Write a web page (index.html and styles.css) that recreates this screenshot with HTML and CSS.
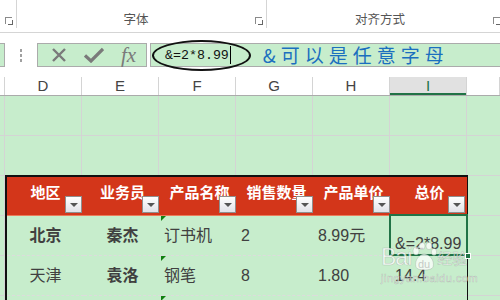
FILE: index.html
```html
<!DOCTYPE html>
<html>
<head lang="zh">
    <meta charset="UTF-8">
    <title>总价</title>
    <link rel="stylesheet" href="styles.css">
</head>
<body>

<div class="ribbon">
    <div class="grp grp-a"><span class="lbl"></span><span class="launch"></span></div>
    <div class="grp grp-b"><span class="lbl">字体</span><span class="launch"></span></div>
    <div class="grp grp-c"><span class="lbl">对齐方式</span><span class="launch"></span></div>
</div>

<div class="fbar">
    <div class="namebox"></div>
    <div class="grip"><i></i><i></i><i></i></div>
    <div class="fbtns">
        <span class="fbtn">
            <svg width="16" height="16" viewBox="0 0 16 16"><path d="M2 2 L14 14 M14 2 L2 14" stroke="#7a7a7a" stroke-width="2.4" fill="none"/></svg>
        </span>
        <span class="fbtn">
            <svg width="20" height="16" viewBox="0 0 20 16"><path d="M1 8.5 L7 14 L19 2" stroke="#7a7a7a" stroke-width="3.2" fill="none"/></svg>
        </span>
        <span class="fbtn fx">fx</span>
    </div>
    <div class="finput">
        <span class="ftext">&amp;=2*8.99</span><span class="caret"></span>
        <span class="note">&amp;可以是任意字母</span>
        <span class="ring"></span>
    </div>
</div>

<div class="colhead">
    <div class="ch corner"></div>
    <div class="ch">D</div>
    <div class="ch">E</div>
    <div class="ch">F</div>
    <div class="ch">G</div>
    <div class="ch">H</div>
    <div class="ch sel">I</div>
    <div class="ch"></div>
</div>

<div class="sheet">
    <div class="tbl">
        <div class="th">地区<span class="filter"></span></div>
        <div class="th">业务员<span class="filter"></span></div>
        <div class="th">产品名称<span class="filter"></span></div>
        <div class="th">销售数量<span class="filter"></span></div>
        <div class="th">产品单价<span class="filter"></span></div>
        <div class="th">总价<span class="filter"></span></div>

        <div class="td mid bold">北京</div>
        <div class="td mid bold">秦杰</div>
        <div class="td mark">订书机</div>
        <div class="td">2</div>
        <div class="td">8.99元</div>
        <div class="td cur">&amp;=2*8.99<span class="handle"></span></div>

        <div class="td mid">天津</div>
        <div class="td mid bold">袁洛</div>
        <div class="td mark">钢笔</div>
        <div class="td">8</div>
        <div class="td">1.80</div>
        <div class="td">14.4</div>

        <div class="td last"></div>
        <div class="td last"></div>
        <div class="td last mark"></div>
        <div class="td last"></div>
        <div class="td last"></div>
        <div class="td last"></div>
    </div>

    <div class="watermark">
        <div class="wm-top">
            <span class="wm-bai">Bai</span>
            <svg width="26" height="30" viewBox="0 0 26 30">
                <ellipse cx="5" cy="9" rx="3" ry="4" />
                <ellipse cx="11" cy="4" rx="3" ry="3.6" />
                <ellipse cx="18" cy="4" rx="3" ry="3.6" />
                <ellipse cx="23" cy="10" rx="2.6" ry="3.6" />
                <path d="M5 25 C3 18 9 12 13 12 C18 12 24 18 22 25 C21 29 6 29 5 25 Z" />
                <text x="7" y="26" class="wm-du">du</text>
            </svg>
            <span class="wm-jy">经验</span>
        </div>
        <div class="wm-url">jingyan.baidu.com</div>
    </div>
</div>

</body>
</html>
```

FILE: styles.css
```css
*{
    margin: 0px;
    padding: 0px;
    box-sizing: border-box;
}
body{
    width: 500px;
    height: 300px;
    overflow: hidden;
    background: #ffffff;
    font-family: "Liberation Sans", "Noto Sans CJK SC", sans-serif;
    color: #444444;
}

/* ribbon */
.ribbon{
    display: flex;
    align-items: flex-start;
    height: 33px;
    border-bottom: 1px solid #d5d5d5;
}
.grp{
    display: flex;
    align-items: flex-end;
    height: 28px;
    padding-bottom: 1px;
    border-right: 1px solid #d5d5d5;
    flex-shrink: 0;
}
.grp-a{ width: 17px; }
.grp-b{ width: 250px; }
.grp-c{ width: 238px; }
.lbl{
    flex: 1;
    text-align: center;
    font-size: 12.5px;
    line-height: 16px;
    color: #555555;
    font-family: "Noto Sans CJK SC", sans-serif;
}
.launch{
    width: 7px;
    height: 7px;
    margin: 0 4px 3px 0;
    border-left: 1px solid #8a8a8a;
    border-top: 1px solid #8a8a8a;
    position: relative;
}
.launch::after{
    content: "";
    position: absolute;
    right: -1px;
    bottom: -1px;
    width: 4px;
    height: 4px;
    border-right: 1px solid #666666;
    border-bottom: 1px solid #666666;
}

/* formula bar */
.fbar{
    display: flex;
    height: 24px;
    margin-top: 10px;
}
.namebox{
    width: 5px;
    background: #c7edcc;
    border: 1px solid #ababab;
    border-left: none;
}
.grip{
    width: 32px;
    display: flex;
    flex-direction: column;
    align-items: center;
    justify-content: center;
    gap: 2px;
}
.grip i{
    width: 2px;
    height: 3px;
    background: #a0a0a0;
}
.fbtns{
    width: 110px;
    margin-right: 3px;
    display: flex;
    align-items: center;
    padding-left: 3px;
    background: #c7edcc;
    border: 1px solid #ababab;
}
.fbtn{
    width: 35px;
    display: flex;
    justify-content: center;
    align-items: center;
}
.fx{
    font-family: "Liberation Serif", serif;
    font-style: italic;
    font-size: 21px;
    color: #7a7a7a;
    line-height: 20px;
}
.finput{
    flex: 1;
    position: relative;
    display: flex;
    align-items: center;
    padding-left: 14px;
    background: #c7edcc;
    border: 1px solid #ababab;
    border-right: none;
}
.ftext{
    font-family: "Liberation Mono", monospace;
    font-size: 13.3px;
    color: #111111;
}
.caret{
    width: 1px;
    height: 18px;
    background: #000000;
    margin-left: 1px;
}
.note{
    margin-left: 32px;
    font-family: "Noto Sans CJK SC", sans-serif;
    font-size: 19px;
    letter-spacing: 5px;
    color: #1b6fbf;
    line-height: 22px;
}
.ring{
    position: absolute;
    left: 1px;
    top: -4px;
    width: 99px;
    height: 31px;
    border: 2px solid #111111;
    border-radius: 50%;
}

/* column letters */
.colhead{
    display: grid;
    grid-template-columns: 5px repeat(6, 77px) 1fr;
    height: 19px;
    margin-top: 10px;
    border-bottom: 1px solid #ababab;
}
.ch{
    border-right: 1px solid #d4d4d4;
    text-align: center;
    font-size: 15px;
    line-height: 18px;
    color: #444444;
}
.ch.sel{
    background: #e1e1e1;
    color: #217346;
    box-shadow: inset 0 -2px #217346;
}

/* sheet */
.sheet{
    position: relative;
    height: 204px;
    overflow: hidden;
    background-color: #c7edcc;
    background-image:
        repeating-linear-gradient(to bottom, transparent 0 39px, #d4d4d4 39px 40px),
        repeating-linear-gradient(to right, #d4d4d4 0 1px, transparent 1px 77px);
    background-position: 0 0, 4px 0;
    padding: 79px 0 0 5px;
}
.tbl{
    display: grid;
    grid-template-columns: 77px 77px 77px 77px 77px 75px;
    width: 463px;
    background: #c7edcc;
    border: 2px solid #111111;
    border-right-width: 1px;
    border-bottom: none;
}
.th{
    position: relative;
    height: 39px;
    background: #d3361a;
    border-bottom: 1px solid #ec7b5a;
    color: #ffffff;
    font-weight: bold;
    font-size: 15px;
    line-height: 20px;
    text-align: center;
    padding-top: 5px;
    font-family: "Noto Sans CJK SC", sans-serif;
}
.filter{
    position: absolute;
    right: 2px;
    bottom: 2px;
    width: 17px;
    height: 17px;
    background: linear-gradient(#ffffff, #e2e2e8);
    border: 1px solid #8f8f8f;
}
.filter::after{
    content: "";
    position: absolute;
    left: 4px;
    top: 6px;
    border-top: 4px solid #555555;
    border-left: 4px solid transparent;
    border-right: 4px solid transparent;
}
.td{
    position: relative;
    height: 40px;
    border-bottom: 1px dashed #dcdcdc;
    padding-left: 3px;
    font-size: 16px;
    line-height: 39px;
    color: #404040;
    font-family: "Liberation Sans", "Noto Sans CJK SC", sans-serif;
}
.td.last{
    height: 6px;
    border-bottom: none;
}
.mid{
    text-align: center;
    padding-left: 0;
}
.bold{
    font-weight: bold;
}
.mark::before{
    content: "";
    position: absolute;
    left: 0;
    top: 0;
    border-top: 5px solid #108010;
    border-right: 5px solid transparent;
}
.cur{
    display: flex;
    align-items: flex-end;
    line-height: 20px;
    padding-bottom: 1px;
}
.cur::after{
    content: "";
    position: absolute;
    left: -3px;
    top: -2px;
    right: -1px;
    bottom: -1px;
    border: 2px solid #217346;
}
.handle{
    position: absolute;
    right: -4px;
    bottom: -4px;
    width: 6px;
    height: 6px;
    background: #217346;
    border: 1px solid #ffffff;
    z-index: 1;
}

/* watermark */
.watermark{
    position: absolute;
    left: 381px;
    top: 146px;
    color: rgba(255, 255, 255, 0.75);
    -webkit-text-stroke: 0.6px rgba(110, 110, 110, 0.35);
}
.wm-top{
    display: flex;
    align-items: flex-end;
}
.wm-bai{
    font-size: 23px;
    line-height: 22px;
    letter-spacing: -1px;
}
.watermark svg{
    fill: rgba(255, 255, 255, 0.75);
    stroke: rgba(110, 110, 110, 0.35);
    stroke-width: 0.6;
    margin-bottom: -4px;
}
.wm-du{
    font-family: "Liberation Sans", sans-serif;
    font-size: 11px;
    fill: rgba(150, 150, 150, 0.5);
    stroke: none;
}
.wm-jy{
    font-family: "Noto Sans CJK SC", sans-serif;
    font-size: 15px;
    line-height: 20px;
}
.wm-url{
    font-size: 11px;
    letter-spacing: 0.5px;
    margin-top: 4px;
}
```
